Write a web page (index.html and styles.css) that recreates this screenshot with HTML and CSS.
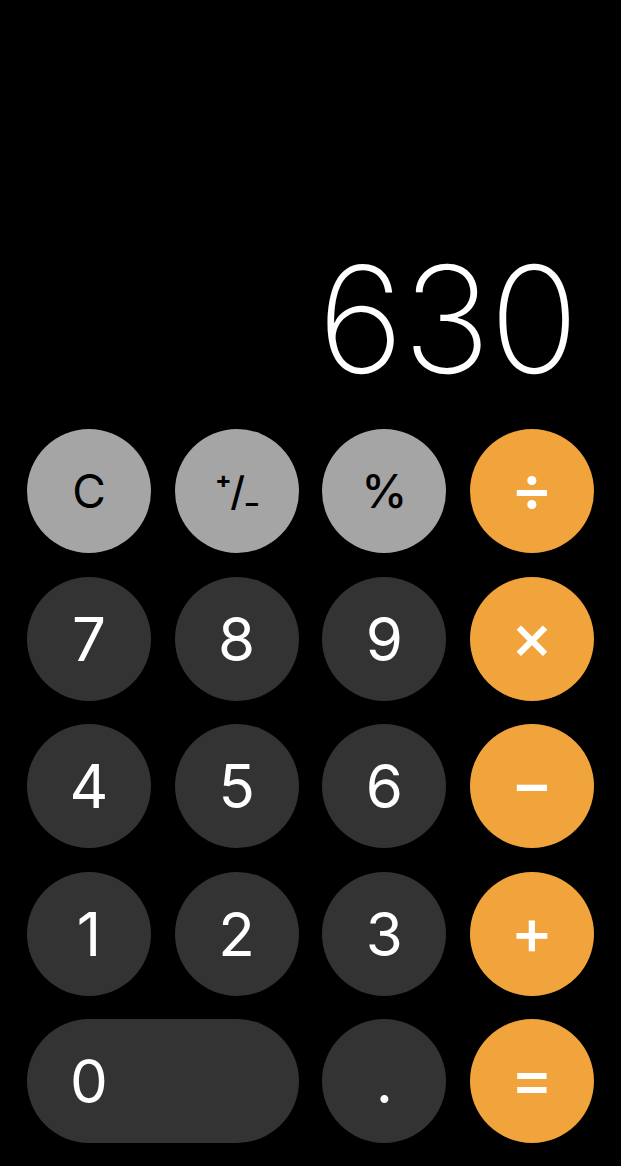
FILE: index.html
```html
<!DOCTYPE html>
<html lang="en">
<head>
<meta charset="utf-8">
<title>Calculator</title>
<link rel="stylesheet" href="styles.css">
</head>
<body>
<main class="calc">
  <div class="display">630</div>
  <div class="keypad">
    <button class="key fn"><span class="lbl-c">C</span></button>
    <button class="key fn"><span class="pm">⁺/₋</span></button>
    <button class="key fn"><span class="lbl-pct">%</span></button>
    <button class="key op"><span class="op-lbl">÷</span></button>

    <button class="key num">7</button>
    <button class="key num">8</button>
    <button class="key num">9</button>
    <button class="key op"><span class="op-lbl">×</span></button>

    <button class="key num">4</button>
    <button class="key num">5</button>
    <button class="key num">6</button>
    <button class="key op"><span class="op-lbl">−</span></button>

    <button class="key num">1</button>
    <button class="key num">2</button>
    <button class="key num">3</button>
    <button class="key op"><span class="op-lbl">+</span></button>

    <button class="key num zero"><span class="zero-lbl">0</span></button>
    <button class="key num">.</button>
    <button class="key op"><span class="op-lbl">=</span></button>
  </div>
</main>
</body>
</html>
```
FILE: styles.css
```css
html, body {
  margin: 0;
  padding: 0;
  background: #000;
}

.calc {
  width: 621px;
  height: 1166px;
  display: flex;
  flex-direction: column;
  font-family: "Inter", "Roboto", "Liberation Sans", sans-serif;
  color: #fff;
}

.display {
  margin-top: 246px;
  padding-right: 43px;
  text-align: right;
  font-size: 148px;
  font-weight: 200;
  line-height: 148px;
  height: 148px;
  letter-spacing: -1px;
}

.keypad {
  margin-top: 35px;
  padding-left: 27px;
  display: grid;
  grid-template-columns: repeat(4, 124px);
  grid-auto-rows: 124px;
  column-gap: 23.67px;
  row-gap: 23.5px;
}

.key {
  border: 0;
  margin: 0;
  padding: 0;
  border-radius: 62px;
  display: flex;
  align-items: center;
  justify-content: center;
  font-family: inherit;
  line-height: 1;
  cursor: pointer;
}

.num {
  background: #333333;
  color: #fff;
  font-size: 60px;
  font-weight: 400;
}

.fn {
  background: #a5a5a5;
  color: #000;
  font-size: 46px;
  font-weight: 400;
}

.lbl-pct {
  font-weight: 500;
}

.op {
  background: #f1a43c;
  color: #fff;
  font-size: 64px;
  font-weight: 500;
}

.op-lbl {
  display: block;
  line-height: 1;
  margin-top: -6px;
}

.zero {
  grid-column: span 2;
  justify-content: flex-start;
}

.zero-lbl {
  width: 124px;
  text-align: center;
}

.pm {
  display: block;
  font-size: 40px;
  font-weight: 500;
  line-height: 1;
  letter-spacing: -2px;
  margin-top: 2px;
}
```
